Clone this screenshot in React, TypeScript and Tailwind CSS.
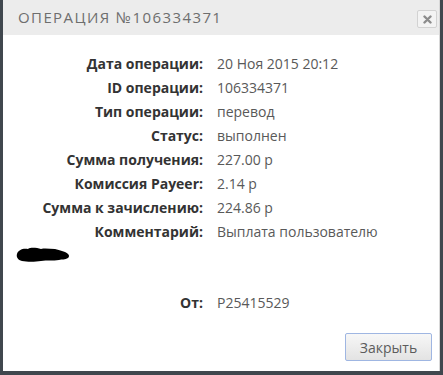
const rows: [string, string][] = [
  ["Дата операции:", "20 Ноя 2015 20:12"],
  ["ID операции:", "106334371"],
  ["Тип операции:", "перевод"],
  ["Статус:", "выполнен"],
  ["Сумма получения:", "227.00 р"],
  ["Комиссия Payeer:", "2.14 р"],
  ["Сумма к зачислению:", "224.86 р"],
  ["Комментарий:", "Выплата пользователю"],
];

function Row({ label, value }: { label: string; value: string }) {
  return (
    <div className="grid grid-cols-[200px_1fr] gap-x-[14px] h-6 items-center">
      <span className="text-right font-bold text-[#333]">{label}</span>
      <span className="text-[#595959]">{value}</span>
    </div>
  );
}

export default function App() {
  return (
    <div
      className="w-[443px] h-[375px] bg-[#40474e] pl-[3px] pr-[3px] pb-[4px] overflow-hidden"
      style={{ fontFamily: '"Open Sans", "DejaVu Sans", sans-serif' }}
    >
      <div className="h-full bg-white flex flex-col border-r border-[#d8d8d8]">
        <div className="h-[35px] bg-[#ececec] flex items-center justify-between pl-[15px] pr-[2px]">
          <h1 className="text-[15px] tracking-[1.4px] text-[#6e6e6e] uppercase">Операция №106334371</h1>
          <button className="w-5 h-[18px] mt-[3px] border border-[#d2d2d2] bg-[#f3f3f3] rounded-[2px] flex items-center justify-center">
            <svg width="9" height="9" viewBox="0 0 9 9">
              <path d="M1.5 1.5 L7.5 7.5 M7.5 1.5 L1.5 7.5" stroke="#8c8c8c" strokeWidth="2.4" strokeLinecap="round" />
            </svg>
          </button>
        </div>

        <div className="pt-4 text-[14px]">
          {rows.map(([l, v]) => (
            <Row key={l} label={l} value={v} />
          ))}
        </div>

        <div className="ml-[12px] mt-[3px] h-4">
          <svg width="56" height="17" viewBox="0 0 56 17">
            <path
              d="M2 8 C3 4 8 2 13 3 C16 1 22 2 26 3 C30 2 35 3 40 3 C44 4 47 5 50 6 C54 8 55 10 53 12 C50 14 47 13 44 14 C38 15 32 14 26 15 C20 16 12 16 7 15 C3 14 1 11 2 8 Z"
              fill="#000"
            />
          </svg>
        </div>

        <div className="mt-[28px] text-[14px]">
          <Row label="От:" value="P25415529" />
        </div>

        <div className="mt-[19px] flex justify-end pr-[7px]">
          <button className="w-[87px] h-[28px] border border-[#9fb6e2] rounded-[2px] bg-gradient-to-b from-[#f7f7f7] to-[#e3e3e3] text-[14px] text-[#5c5c5c]">
            Закрыть
          </button>
        </div>
      </div>
    </div>
  );
}
